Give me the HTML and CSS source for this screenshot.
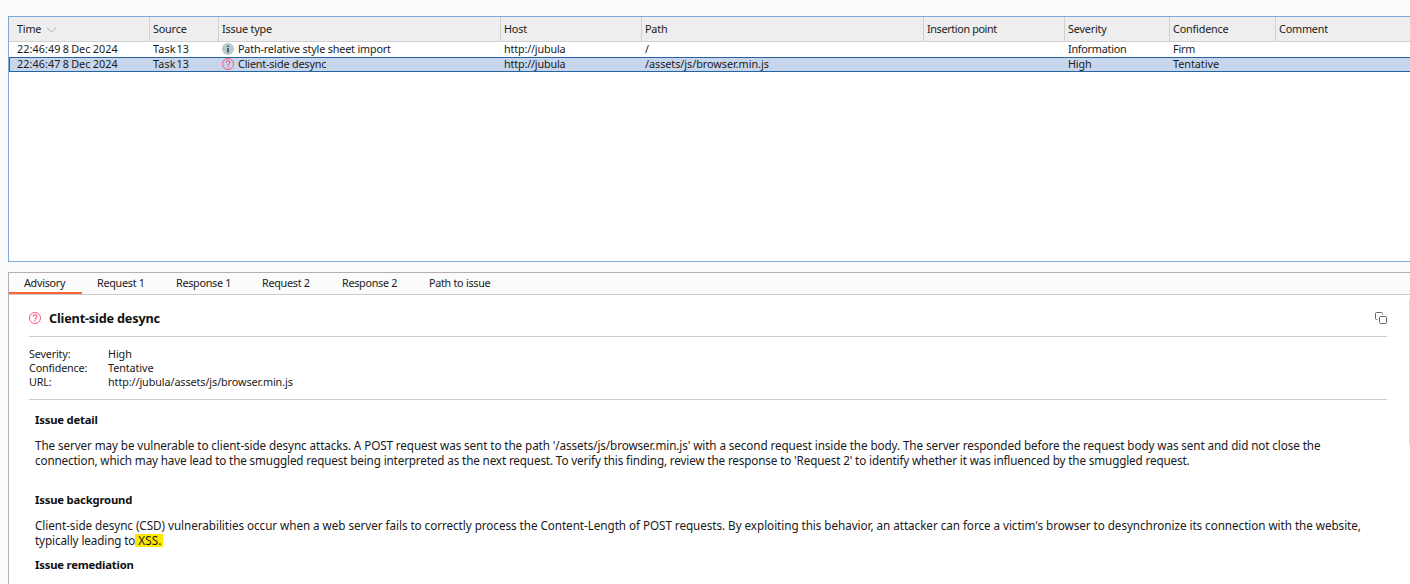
FILE: index.html
```
<!DOCTYPE html>
<html lang="en">
<head>
<meta charset="utf-8">
<title>Issues</title>
<link rel="stylesheet" href="styles.css">
</head>
<body>
<main class="app">
  <section class="issues">
    <div class="row head">
      <div class="cell">Time<svg class="sort" width="11" height="6" viewBox="0 0 11 6"><path d="M1 .7 5.5 5 10 .7"/></svg></div>
      <div class="cell">Source</div>
      <div class="cell">Issue type</div>
      <div class="cell">Host</div>
      <div class="cell">Path</div>
      <div class="cell tight">Insertion point</div>
      <div class="cell">Severity</div>
      <div class="cell">Confidence</div>
      <div class="cell">Comment</div>
    </div>
    <div class="row">
      <div class="cell time">22:46:49 8 Dec 2024</div>
      <div class="cell task">Task 13</div>
      <div class="cell"><svg class="icon" width="12" height="12" viewBox="0 0 12 12"><circle cx="6" cy="6" r="6" fill="#b4cbd0"/><path d="M5.2 2.5h1.6v1.4H5.2zM5.2 5h1.6v4.5H5.2z" fill="#444"/></svg>Path-relative style sheet import</div>
      <div class="cell">http://jubula</div>
      <div class="cell">/</div>
      <div class="cell"></div>
      <div class="cell info">Information</div>
      <div class="cell">Firm</div>
      <div class="cell"></div>
    </div>
    <div class="row selected">
      <div class="cell time">22:46:47 8 Dec 2024</div>
      <div class="cell task">Task 13</div>
      <div class="cell"><svg class="icon" width="12" height="12" viewBox="0 0 12 12"><circle class="ring" cx="6" cy="6" r="5.5"/><path class="mark" d="M4.2 4.7C4.2 2.3 7.9 2.4 7.9 4.6 7.9 6 6 5.8 6 7.4M6 8.3v1.2"/></svg>Client-side desync</div>
      <div class="cell">http://jubula</div>
      <div class="cell path">/assets/js/browser.min.js</div>
      <div class="cell"></div>
      <div class="cell">High</div>
      <div class="cell path">Tentative</div>
      <div class="cell"></div>
    </div>
  </section>
  <section class="detail">
    <nav class="tabs">
      <div class="tab active">Advisory</div>
      <div class="tab">Request 1</div>
      <div class="tab">Response 1</div>
      <div class="tab">Request 2</div>
      <div class="tab">Response 2</div>
      <div class="tab">Path to issue</div>
    </nav>
    <div class="content">
      <div class="advisory">
        <header class="title">
          <svg class="title-icon" width="12" height="12" viewBox="0 0 12 12"><circle class="ring" cx="6" cy="6" r="5.5"/><path class="mark" d="M4.2 4.7C4.2 2.3 7.9 2.4 7.9 4.6 7.9 6 6 5.8 6 7.4M6 8.3v1.2"/></svg>
          <h1>Client-side desync</h1>
          <svg class="copy" width="12" height="12" viewBox="0 0 12 12"><rect x="4.5" y="4.5" width="7" height="7" rx="1"/><path d="M2.5 7.5h-1a1 1 0 0 1-1-1v-5a1 1 0 0 1 1-1h5a1 1 0 0 1 1 1v1"/></svg>
        </header>
        <dl class="facts">
          <dt>Severity:</dt><dd>High</dd>
          <dt>Confidence:</dt><dd>Tentative</dd>
          <dt>URL:</dt><dd>http://jubula/assets/js/browser.min.js</dd>
        </dl>
        <article class="prose">
          <h2>Issue detail</h2>
          <p><span class="l1">The server may be vulnerable to client-side desync attacks. A POST request was sent to the path '/assets/js/browser.min.js' with a second request inside the body. The server responded before the request body was sent and did not close the</span><br><span class="l2">connection, which may have lead to the smuggled request being interpreted as the next request. To verify this finding, review the response to 'Request 2' to identify whether it was influenced by the smuggled request.</span></p>
          <h2 class="spaced">Issue background</h2>
          <p><span class="l3">Client-side desync (CSD) vulnerabilities occur when a web server fails to correctly process the Content-Length of POST requests. By exploiting this behavior, an attacker can force a victim's browser to desynchronize its connection with the website,</span><br><span class="l4">typically leading to <mark>XSS.</mark></span></p>
          <h2>Issue remediation</h2>
        </article>
      </div>
      <div class="scrollbar"></div>
    </div>
  </section>
</main>
</body>
</html>
```
FILE: styles.css
```
* { box-sizing: border-box; }
body {
  margin: 0;
  height: 584px;
  overflow: hidden;
  background: #fbfbfb;
  color: #1a1a1a;
  font: 10.8px/14px "Noto Sans", sans-serif;
  letter-spacing: -0.17px;
  white-space: nowrap;
}
.app { display: flex; flex-direction: column; padding: 16px 0 0 8px; height: 584px; }
.issues { height: 246px; flex: none; background: #fff; border: 1px solid #7eaad6; border-right: 0; }
.row { display: grid; grid-template-columns: 140px 69px 282px 141px 282px 141px 105px 106px 1fr; height: 15px; line-height: 14px; }
.cell { padding: 0 0 1px 4px; display: flex; align-items: center; }
.cell:first-child { padding-left: 8px; }
.head { height: 25px; background: #eee; border-bottom: 1px solid #d0d0d0; }
.head .cell { border-left: 1px solid #d0d0d0; padding: 0 0 0 3px; }
.head .cell:first-child { border-left: 0; padding-left: 8px; }
.time { letter-spacing: 0.1px; word-spacing: -0.8px; }
.task { letter-spacing: 0.1px; word-spacing: -2px; }
.tight { letter-spacing: -0.36px; }
.info { letter-spacing: -0.24px; }
.path { letter-spacing: -0.03px; }
.selected { background: #c7d6ec; border: solid #26659f; border-width: 1px 0 1px 1px; grid-template-columns: 139px 69px 282px 141px 282px 141px 105px 106px 1fr; grid-template-rows: 13px; line-height: 12px; }
.selected .cell:first-child { padding-left: 7px; }
.sort { margin: 1px 0 0 5px; fill: none; stroke: #aaa; }
.icon { margin-right: 4px; flex: none; }
.ring { fill: none; stroke: #ef5b7a; }
.mark { fill: none; stroke: #ef5b7a; stroke-width: 1.2; }
.detail { margin-top: 10px; flex: 1; background: #fff; border: 1px solid #b5afb0; border-width: 1px 0 0 1px; min-height: 0; }
.tabs { display: grid; grid-template-columns: 73px 79px 86px 80px 87px 1fr; height: 22px; background: #fbfbfb; border-bottom: 1px solid #ccc; letter-spacing: -0.29px; }
.tab { padding: 3px 0 0 15px; height: 21px; }
.active { border-bottom: 2px solid #ff6633; }
.content { display: flex; justify-content: space-between; }
.advisory { width: 1358px; margin-left: 20px; }
.title { display: flex; align-items: center; height: 42px; padding-top: 5px; border-bottom: 1px solid #ccc; }
h1 { margin: 0 auto 0 8px; font-size: 12.7px; line-height: 18px; letter-spacing: -0.18px; color: #111; }
.copy { fill: none; stroke: #666; }
.facts { display: grid; grid-template-columns: 79px 1fr; margin: 0; padding-top: 10px; height: 63px; border-bottom: 1px solid #ccc; align-content: start; }
.facts dd { margin: 0; letter-spacing: -0.09px; }
.prose { padding: 12px 0 0 6px; font-size: 11.7px; line-height: 15px; }
h2 { margin: 0; font-size: 11.3px; line-height: 15px; letter-spacing: -0.2px; color: #111; }
p { margin: 11px 0 9px; }
h2.spaced { margin-top: 24px; }
.l1 { letter-spacing: -0.096px; }
.l2 { letter-spacing: -0.138px; }
.l3 { letter-spacing: -0.05px; }
.l4 { letter-spacing: -0.12px; }
mark { display: inline-block; vertical-align: top; height: 15px; padding: 0 2px 0 3px; margin-left: -3px; letter-spacing: 0.1px; background: linear-gradient(#fde900, #fde900) 0 1px / 100% 13px no-repeat; color: inherit; }
.scrollbar { width: 1px; height: 146px; margin-top: 4px; background: #ddd; }
```
